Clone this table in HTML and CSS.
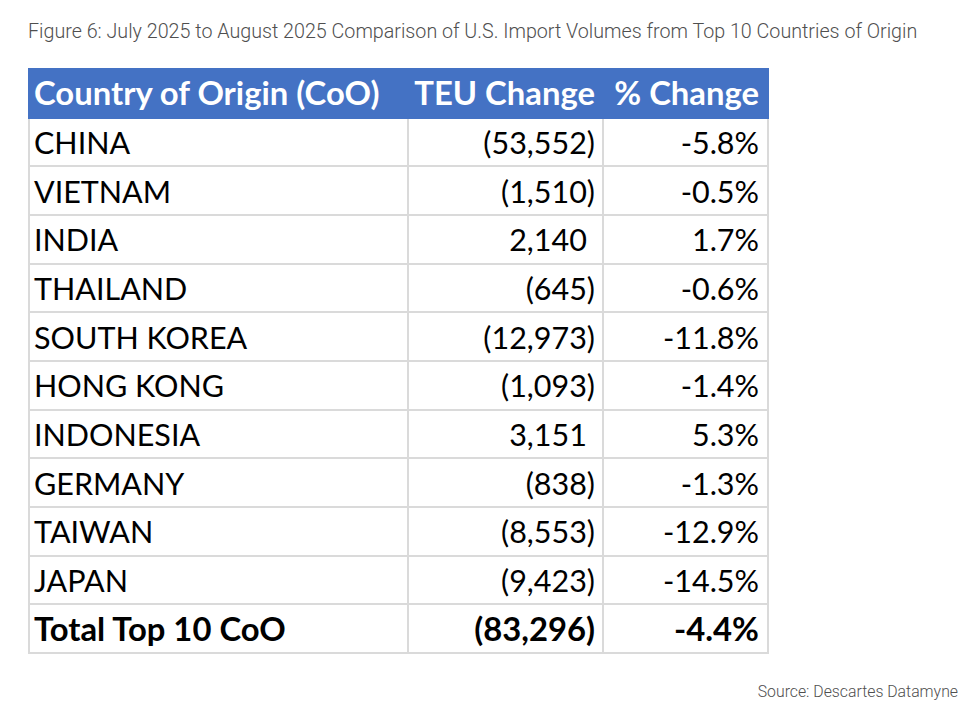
FILE: index.html
```html
<!DOCTYPE html>
<html lang="en">
<head>
<meta charset="utf-8">
<title>Figure 6</title>
<link rel="stylesheet" href="styles.css">
</head>
<body>
<div class="figure">
  <p class="caption">Figure 6: July 2025 to August 2025 Comparison of U.S. Import Volumes from Top 10 Countries of Origin</p>
  <table class="data">
    <colgroup>
      <col class="c1"><col class="c2"><col class="c3">
    </colgroup>
    <thead>
      <tr><th class="name">Country of Origin (CoO)</th><th class="num">TEU Change</th><th class="num">% Change</th></tr>
    </thead>
    <tbody>
      <tr><td>CHINA</td><td class="num">(53,552)</td><td class="num">-5.8%</td></tr>
      <tr><td>VIETNAM</td><td class="num">(1,510)</td><td class="num">-0.5%</td></tr>
      <tr><td>INDIA</td><td class="num">2,140<span class="pad">)</span></td><td class="num">1.7%</td></tr>
      <tr><td>THAILAND</td><td class="num">(645)</td><td class="num">-0.6%</td></tr>
      <tr><td>SOUTH KOREA</td><td class="num">(12,973)</td><td class="num">-11.8%</td></tr>
      <tr><td>HONG KONG</td><td class="num">(1,093)</td><td class="num">-1.4%</td></tr>
      <tr><td>INDONESIA</td><td class="num">3,151<span class="pad">)</span></td><td class="num">5.3%</td></tr>
      <tr><td>GERMANY</td><td class="num">(838)</td><td class="num">-1.3%</td></tr>
      <tr><td>TAIWAN</td><td class="num">(8,553)</td><td class="num">-12.9%</td></tr>
      <tr><td>JAPAN</td><td class="num">(9,423)</td><td class="num">-14.5%</td></tr>
      <tr class="total"><td>Total Top 10 CoO</td><td class="num">(83,296)</td><td class="num">-4.4%</td></tr>
    </tbody>
  </table>
  <p class="source">Source: Descartes Datamyne</p>
</div>
</body>
</html>
```
FILE: styles.css
```css
html, body {
  margin: 0;
  padding: 0;
  background: #ffffff;
}

.figure {
  padding: 20px 22px 0 28px;
}

.caption {
  margin: 0;
  font-family: Roboto, "Liberation Sans", sans-serif;
  font-weight: 300;
  font-size: 19.7px;
  line-height: 24px;
  color: #4f4f4f;
  white-space: nowrap;
}

.data {
  margin-top: 24px;
  border-collapse: collapse;
  table-layout: fixed;
  width: 739px;
  font-family: Lato, "Open Sans", sans-serif;
  font-size: 30.5px;
  color: #000000;
}

.c1 { width: 379px; }
.c2 { width: 195px; }
.c3 { width: 165px; }

.data th,
.data td {
  height: 46.67px;
  padding: 0 7px 0 4px;
  border: 2px solid #dadada;
  white-space: nowrap;
  line-height: 46px;
}

.data th {
  background: #4472c4;
  color: #ffffff;
  font-weight: 700;
  font-size: 32.8px;
  border-color: #4472c4;
  text-align: left;
}

.data th.num,
.data td.num {
  text-align: right;
  padding-right: 7px;
}

.data td:last-child,
.data th:last-child {
  padding-right: 8px;
}

.pad {
  visibility: hidden;
}

.total td {
  font-weight: 700;
  font-size: 32.8px;
}

.total td.num {
  border-top: 2px solid #000000;
}

.source {
  margin: 28px 0 0;
  text-align: right;
  font-family: Roboto, "Liberation Sans", sans-serif;
  font-weight: 300;
  font-size: 15.8px;
  line-height: 20px;
  color: #4f4f4f;
}
```
